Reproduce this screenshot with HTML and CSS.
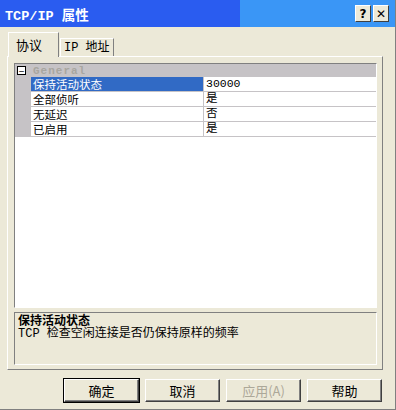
FILE: index.html
```html
<!DOCTYPE html>
<html lang="zh-CN">
<head>
    <meta charset="UTF-8">
    <title>TCP/IP 属性</title>
    <link rel="stylesheet" href="styles.css">
</head>
<body>
    <div class="window">
        <div class="titlebar">
            <span class="title">TCP/IP 属性</span>
            <div class="caption-buttons">
                <span class="cap-btn">?</span>
                <span class="cap-btn">✕</span>
            </div>
        </div>
        <div class="content">
            <div class="tabs">
                <span class="tab active">协议</span>
                <span class="tab">IP 地址</span>
            </div>
            <div class="panel">
                <div class="grid">
                    <div class="category">
                        <span class="toggle">−</span>
                        <span class="cat-name">General</span>
                    </div>
                    <div class="row selected">
                        <span class="name">保持活动状态</span>
                        <span class="value">30000</span>
                    </div>
                    <div class="row">
                        <span class="name">全部侦听</span>
                        <span class="value">是</span>
                    </div>
                    <div class="row">
                        <span class="name">无延迟</span>
                        <span class="value">否</span>
                    </div>
                    <div class="row">
                        <span class="name">已启用</span>
                        <span class="value">是</span>
                    </div>
                </div>
                <div class="desc">
                    <div class="desc-title">保持活动状态</div>
                    <div class="desc-text">TCP 检查空闲连接是否仍保持原样的频率</div>
                </div>
            </div>
            <div class="buttons">
                <button class="btn default">确定</button>
                <button class="btn">取消</button>
                <button class="btn" disabled>应用(A)</button>
                <button class="btn">帮助</button>
            </div>
        </div>
    </div>
</body>
</html>
```

FILE: styles.css
```css
* {
    box-sizing: border-box;
}
body {
    margin: 0;
    font-family: "Noto Sans CJK SC", "DejaVu Sans", sans-serif;
    font-size: 12px;
    color: #000;
    background: #ece9d8;
}
.window {
    width: 396px;
    height: 410px;
    border-right: 1px solid #808080;
    border-bottom: 1px solid #808080;
    display: flex;
    flex-direction: column;
}
.titlebar {
    height: 27px;
    display: flex;
    align-items: center;
    justify-content: space-between;
    background: linear-gradient(to right, #2a5cf0 0, #2a5cf0 240px, #3a96f6 240px);
    padding: 0 6px 0 5px;
}
.title {
    color: #fff;
    font-weight: bold;
    font-size: 13.5px;
    font-family: "Liberation Mono", "Noto Sans CJK SC", monospace;
}
.caption-buttons {
    display: flex;
    gap: 2px;
}
.cap-btn {
    width: 16px;
    height: 17px;
    background: #ece9d8;
    border: 1px solid;
    border-color: #fff #404040 #404040 #fff;
    display: flex;
    align-items: center;
    justify-content: center;
    font-weight: bold;
    font-size: 12px;
    font-family: "DejaVu Sans", sans-serif;
}
.content {
    flex: 1;
    padding: 4px 12px 0 7px;
    display: flex;
    flex-direction: column;
}
.tabs {
    display: flex;
    align-items: flex-end;
    height: 25px;
    padding-left: 1px;
}
.tab {
    border: 1px solid;
    border-color: #fff #808080 transparent #fff;
    border-bottom: none;
    padding: 0 3px;
    height: 19px;
    line-height: 18px;
    margin-bottom: -1px;
}
.tab.active {
    height: 25px;
    line-height: 24px;
    width: 51px;
    padding: 0 0 0 7px;
    background: #ece9d8;
    position: relative;
    z-index: 1;
    font-size: 13px;
}
.tab:not(.active) {
    font-family: "Liberation Mono", "Noto Sans CJK SC", monospace;
    margin-left: 1px;
}
.panel {
    height: 314px;
    border: 1px solid;
    border-color: #fff #808080 #808080 #fff;
    padding: 6px 5px 4px 6px;
    display: flex;
    flex-direction: column;
    gap: 4px;
}
.grid {
    height: 245px;
    flex-shrink: 0;
    border: 1px solid;
    border-color: #808080 #fff #fff #808080;
    background: #fff;
}
.category {
    height: 13px;
    background: #c6c3c6;
    display: flex;
    align-items: center;
    padding-left: 2px;
}
.toggle {
    width: 9px;
    height: 9px;
    border: 1px solid #000;
    background: #fff;
    display: flex;
    align-items: center;
    justify-content: center;
    font-size: 10px;
    line-height: 7px;
    margin-right: 7px;
}
.cat-name {
    font-family: "Liberation Mono", monospace;
    font-weight: bold;
    font-size: 11px;
    color: #a8a6a0;
    letter-spacing: 1px;
}
.row {
    display: flex;
    height: 15px;
    line-height: 14px;
    font-size: 11.5px;
    border-bottom: 1px solid #c6c3c6;
    border-left: 16px solid #c6c3c6;
}
.name {
    width: 173px;
    padding-left: 2px;
    border-right: 1px solid #c6c3c6;
    flex-shrink: 0;
}
.value {
    padding-left: 2px;
    font-family: "Liberation Mono", "Noto Sans CJK SC", monospace;
}
.row.selected .name {
    background: #316ac5;
    color: #fff;
}
.desc {
    flex: 1;
    border: 1px solid;
    border-color: #808080 #fff #fff #808080;
    padding: 0 3px;
    line-height: 14px;
}
.desc-title {
    font-weight: bold;
}
.desc-text {
    font-family: "Liberation Mono", "Noto Sans CJK SC", monospace;
}
.buttons {
    display: flex;
    justify-content: flex-end;
    gap: 6px;
    margin-top: 9px;
    padding-right: 1px;
}
.btn {
    width: 75px;
    height: 23px;
    font-family: "Noto Sans CJK SC", sans-serif;
    font-size: 13px;
    background: #ece9d8;
    border: 1px solid;
    border-color: #fff #404040 #404040 #fff;
    box-shadow: inset -1px -1px 0 #808080;
    padding: 0;
    color: #000;
}
.btn.default {
    outline: 1px solid #000;
}
.btn:disabled {
    color: #aca899;
}
```
